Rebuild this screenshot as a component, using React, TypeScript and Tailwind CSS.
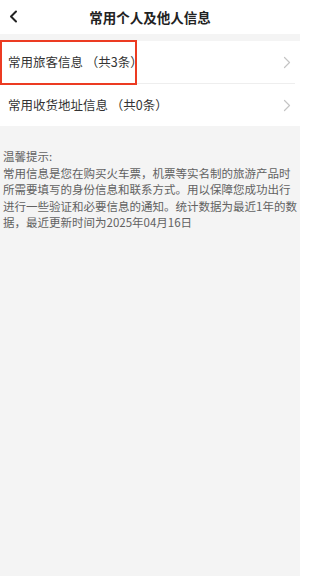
import React from "react";

function Chevron() {
  return (
    <svg width="8" height="13" viewBox="0 0 8 13" fill="none">
      <path d="M1.5 1.5L6.5 6.5L1.5 11.5" stroke="#c4c4c4" strokeWidth="1.2" strokeLinecap="round" strokeLinejoin="round" />
    </svg>
  );
}

export default function App() {
  return (
    <div
      className="w-[300px] h-[576px] overflow-hidden bg-[#f4f4f4] text-[#333]"
      style={{ fontFamily: '"Noto Sans CJK SC", "Noto Sans", sans-serif' }}
    >
      <div className="relative h-[34px] bg-white flex items-center justify-center">
        <svg className="absolute left-[9px] top-[10px]" width="9" height="13" viewBox="0 0 9 13" fill="none">
          <path d="M7 1.5L2 6.5L7 11.5" stroke="#222" strokeWidth="2" strokeLinecap="round" strokeLinejoin="round" />
        </svg>
        <span className="text-[13.5px] font-bold text-[#222]">常用个人及他人信息</span>
      </div>
      <div className="h-[7px]" />
      <div className="bg-white">
        <div className="relative h-[42px] flex items-center justify-between pl-[8px] pr-[9px]">
          <span className="text-[12.5px] text-[#333]">常用旅客信息 （共3条）</span>
          <Chevron />
          <div className="absolute left-0 top-[-1px] w-[137px] h-[45px] border-[2.5px] border-[#ec3b22]" />
        </div>
        <div className="mr-[5px] h-px bg-[#eeeeee]" />
        <div className="h-[42px] flex items-center justify-between pl-[8px] pr-[9px]">
          <span className="text-[12.5px] text-[#333]">常用收货地址信息 （共0条）</span>
          <Chevron />
        </div>
      </div>
      <div className="pt-[22px] px-[3px] text-[11.5px] leading-[16.5px] text-[#626262]">
        <div>温馨提示:</div>
        <div>
          常用信息是您在购买火车票，机票等实名制的旅游产品时所需要填写的身份信息和联系方式。用以保障您成功出行进行一些验证和必要信息的通知。统计数据为最近1年的数据，最近更新时间为2025年04月16日
        </div>
      </div>
    </div>
  );
}
